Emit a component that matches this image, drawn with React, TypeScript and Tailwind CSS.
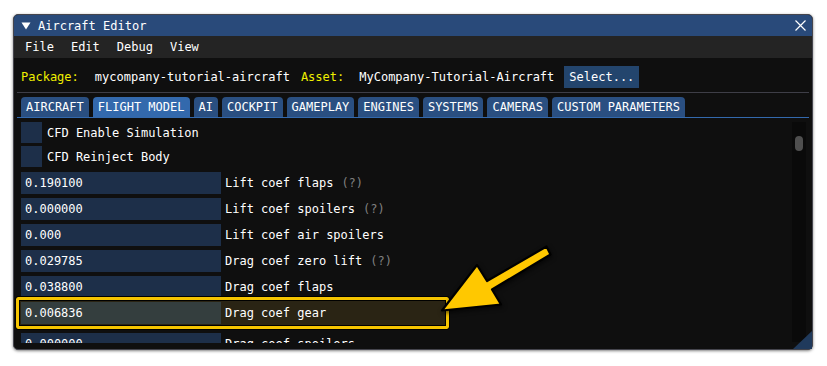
import React from "react";

const TABS = [
  "AIRCRAFT",
  "FLIGHT MODEL",
  "AI",
  "COCKPIT",
  "GAMEPLAY",
  "ENGINES",
  "SYSTEMS",
  "CAMERAS",
  "CUSTOM PARAMETERS",
];

const ROWS = [
  { value: "0.190100", label: "Lift coef flaps", help: true },
  { value: "0.000000", label: "Lift coef spoilers", help: true },
  { value: "0.000", label: "Lift coef air spoilers" },
  { value: "0.029785", label: "Drag coef zero lift", help: true },
  { value: "0.038800", label: "Drag coef flaps" },
  { value: "0.006836", label: "Drag coef gear", marked: true },
  { value: "0.000000", label: "Drag coef spoilers" },
];

function CheckRow({ label }: { label: string }) {
  return (
    <div className="flex h-[24px] items-start">
      <div className="h-[21px] w-[21px] bg-[#1d2f49]" />
      <span className="ml-[5px] flex h-[21px] items-center text-white">{label}</span>
    </div>
  );
}

function FieldRow({
  value,
  label,
  help,
  marked,
}: {
  value: string;
  label: string;
  help?: boolean;
  marked?: boolean;
}) {
  return (
    <div className={`relative flex h-[22px] items-center ${marked ? "mb-[5px]" : ""}`}>
      {/* annotation highlight */}
      {marked && (
        <div className="absolute left-[-5px] top-[-5px] h-[32px] w-[433px] rounded-[2px] border-[3px] border-[#f5c400] bg-[#2a2414] shadow-[inset_0_0_0_1px_#000] outline outline-1 outline-black" />
      )}
      <div
        className={`relative flex h-[22px] w-[200px] items-center pl-[4px] text-white ${
          marked ? "bg-[#343e3e]" : "bg-[#1d2f49]"
        }`}
      >
        {value}
      </div>
      <span className="relative ml-[4px] text-white">{label}</span>
      {help && <span className="relative ml-[8px] text-[#808080]">(?)</span>}
    </div>
  );
}

export default function App() {
  return (
    <div className="relative h-[366px] w-[827px] overflow-hidden bg-white pl-[13px] pt-[14px] font-['DejaVu_Sans_Mono',monospace] text-[12px] leading-none">
      <div className="flex h-[336px] w-[800px] flex-col overflow-hidden rounded-[5px] border border-[#45454d] bg-[#0f0f0f] shadow-[0_1px_3px_rgba(0,0,0,0.5)]">
        {/* Title bar */}
        <div className="flex h-[21px] shrink-0 items-center bg-[#294a7a] pl-[7px] pr-[6px] text-white">
          <svg width="10" height="8" viewBox="0 0 10 8" className="mr-[7px]">
            <polygon points="0.5,0.5 9.5,0.5 5,7.5" fill="#fff" />
          </svg>
          <span>Aircraft Editor</span>
          <svg width="11" height="11" viewBox="0 0 11 11" className="ml-auto">
            <path d="M0.5 0.5 L10.5 10.5 M10.5 0.5 L0.5 10.5" stroke="#fff" strokeWidth="1.2" />
          </svg>
        </div>

        {/* Menu bar */}
        <div className="flex h-[22px] shrink-0 items-center gap-[17px] bg-[#242424] pl-[11px] text-white">
          <span>File</span>
          <span>Edit</span>
          <span>Debug</span>
          <span>View</span>
        </div>

        {/* Package line */}
        <div className="flex h-[22px] shrink-0 items-center pl-[7px] mt-[8px]">
          <span className="text-[#f0f000]">Package:</span>
          <span className="ml-[16px] text-white">mycompany-tutorial-aircraft</span>
          <span className="ml-[11px] text-[#f0f000]">Asset:</span>
          <span className="ml-[15px] text-white">MyCompany-Tutorial-Aircraft</span>
          <button className="ml-[10px] flex h-[22px] items-center bg-[#23456d] px-[5px] text-white">
            Select...
          </button>
        </div>

        <div className="mx-[3px] mt-[4px] h-px shrink-0 bg-[#3e3e47]" />

        {/* Tabs */}
        <div className="mt-[4px] flex h-[20px] shrink-0 gap-[4px] pl-[7px]">
          {TABS.map((t) => (
            <div
              key={t}
              className={`flex h-[20px] items-center rounded-t-[4px] px-[5px] text-white ${
                t === "FLIGHT MODEL" ? "bg-[#3369ad]" : "bg-[#2a4f81]"
              }`}
            >
              {t}
            </div>
          ))}
        </div>
        <div className="mx-[3px] h-px shrink-0 bg-[#3369ad]" />

        {/* Scrolling content */}
        <div className="relative mt-[4px] flex h-[221px] shrink-0">
          <div className="flex-1 overflow-hidden pl-[7px]">
            <CheckRow label="CFD Enable Simulation" />
            <CheckRow label="CFD Reinject Body" />
            <div className="mt-[2px] flex flex-col gap-[4px]">
              {ROWS.map((r, i) => (
                <FieldRow key={i} {...r} />
              ))}
            </div>
          </div>
          <div className="mr-[6px] h-[220px] w-[14px] bg-[#0a0a0a] pt-[14px]">
            <div className="mx-auto h-[15px] w-[8px] rounded-full bg-[#4f4f4f]" />
          </div>
        </div>
      </div>

      {/* resize grip */}
      <svg className="absolute left-[792px] top-[330px]" width="21" height="20" viewBox="0 0 21 20">
        <polygon points="1,19 20,19 20,1" fill="#203a5c" />
      </svg>

      {/* annotation arrow */}
      <svg
        className="pointer-events-none absolute left-0 top-0 drop-shadow-[1px_2px_2px_rgba(0,0,0,0.6)]"
        width="827"
        height="366"
        viewBox="0 0 827 366"
      >
        <polygon
          points="442,310.5 477,265 487,281 546.5,246.5 550.5,254.5 492,289.5 501,304.5"
          fill="#ffc800"
          stroke="#000"
          strokeWidth="2.2"
          strokeLinejoin="round"
        />
      </svg>
    </div>
  );
}
